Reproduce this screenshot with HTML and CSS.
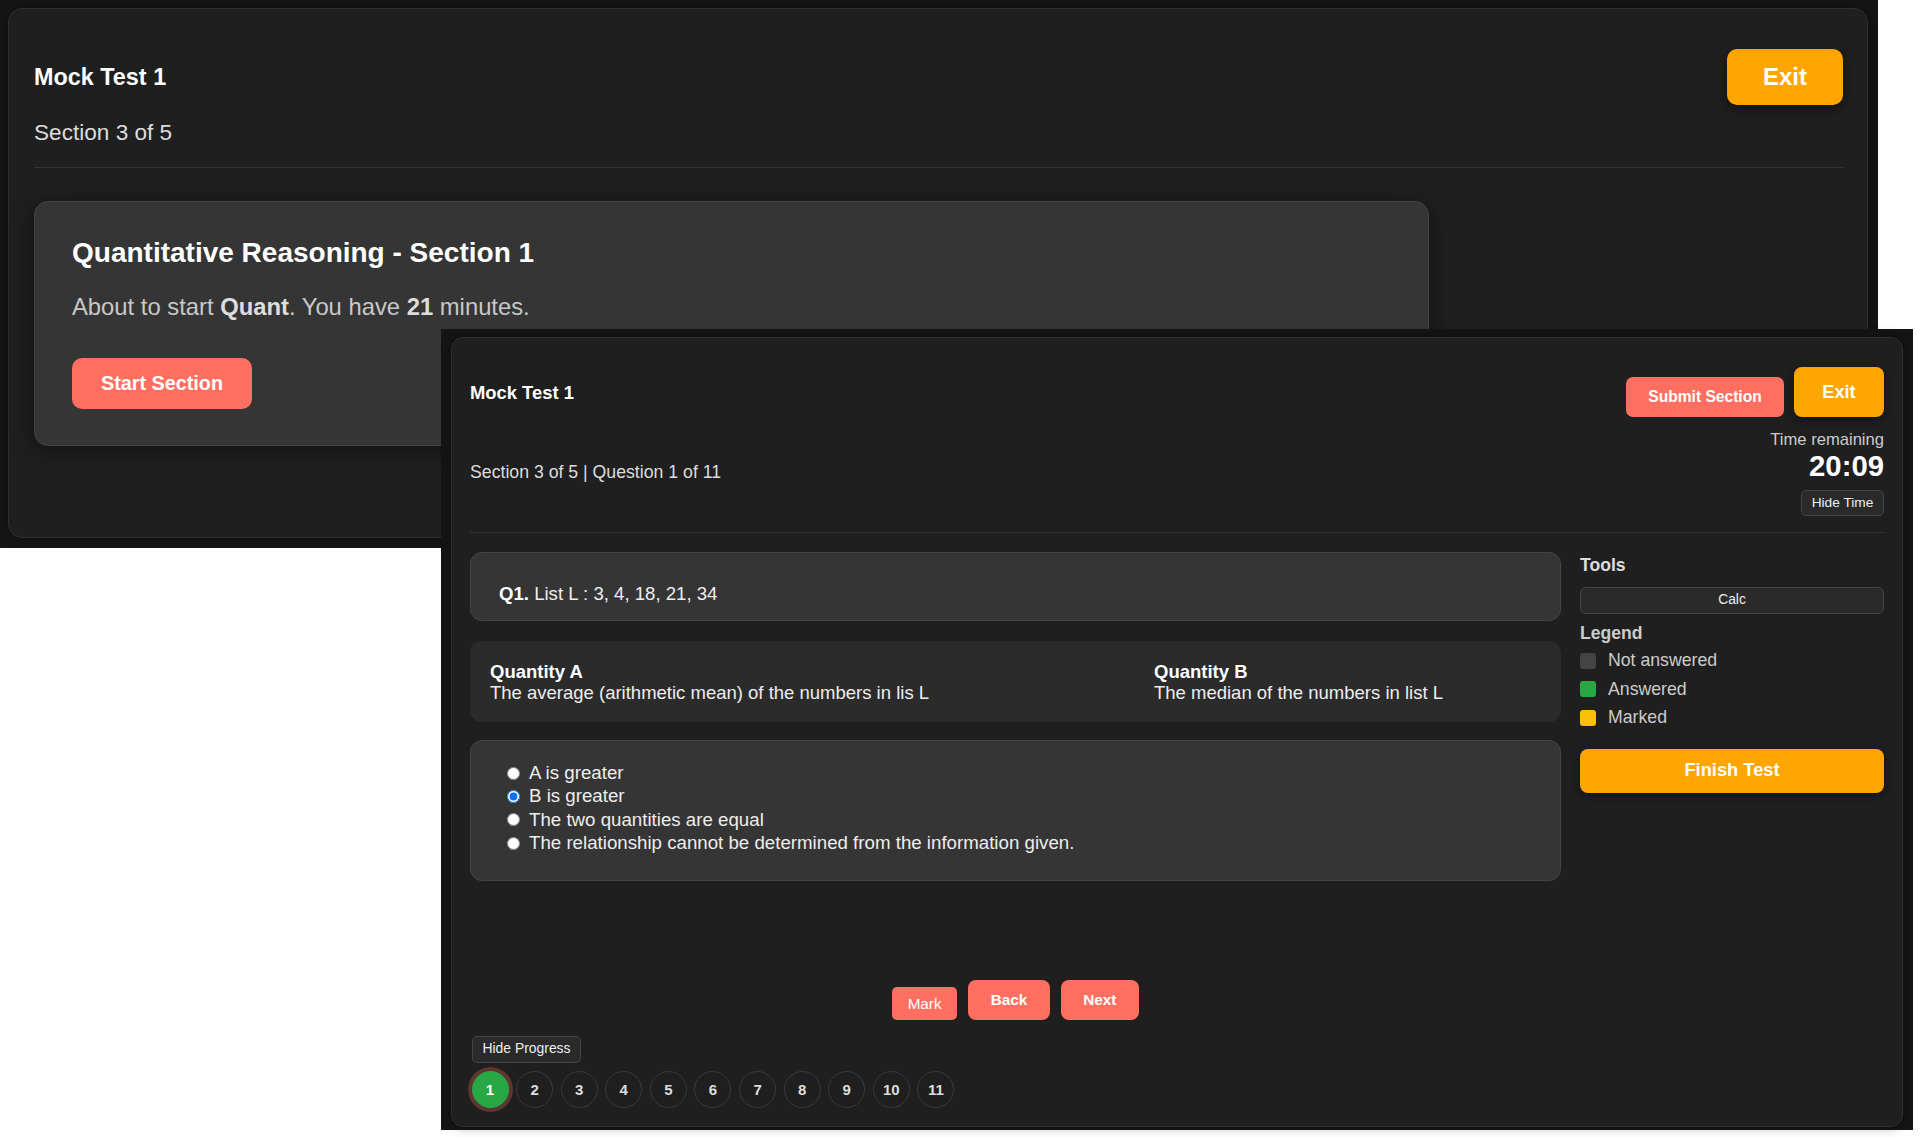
FILE: index.html
```html
<!DOCTYPE html>
<html lang="en">
<head>
<meta charset="utf-8">
<title>Mock Test 1</title>
<link rel="stylesheet" href="styles.css">
</head>
<body>
<div class="desk">

  <section class="win win-intro">
    <div class="card card-intro">
      <header class="intro-head">
        <h1 class="intro-title">Mock Test 1</h1>
        <button class="btn btn-exit-lg">Exit</button>
      </header>
      <p class="intro-sub">Section 3 of 5</p>
      <hr class="rule rule-intro">
      <div class="start-card">
        <h2 class="start-title">Quantitative Reasoning - Section 1</h2>
        <p class="start-text">About to start <b>Quant</b>. You have <b>21</b> minutes.</p>
        <button class="btn btn-start">Start Section</button>
      </div>
    </div>
  </section>

  <section class="win win-test">
    <div class="card card-test">
      <header class="test-head">
        <div class="test-head-left">
          <h1 class="test-title">Mock Test 1</h1>
          <p class="test-sub">Section 3 of 5 | Question 1 of 11</p>
        </div>
        <div class="test-head-right">
          <div class="head-actions">
            <button class="btn btn-submit">Submit Section</button>
            <button class="btn btn-exit-sm">Exit</button>
          </div>
          <div class="time-label">Time remaining</div>
          <div class="time-value">20:09</div>
          <button class="btn btn-ghost btn-hide-time">Hide Time</button>
        </div>
      </header>
      <hr class="rule rule-test">

      <div class="test-body">
        <main class="test-main">
          <div class="panel q-panel"><b>Q1.</b> List L : 3, 4, 18, 21, 34</div>

          <div class="qty-panel">
            <div class="qty">
              <div class="qty-name">Quantity A</div>
              <div class="qty-desc">The average (arithmetic mean) of the numbers in lis L</div>
            </div>
            <div class="qty">
              <div class="qty-name">Quantity B</div>
              <div class="qty-desc">The median of the numbers in list L</div>
            </div>
          </div>

          <div class="panel opt-panel">
            <label class="opt"><input type="radio" name="ans"> A is greater</label>
            <label class="opt"><input type="radio" name="ans" checked> B is greater</label>
            <label class="opt"><input type="radio" name="ans"> The two quantities are equal</label>
            <label class="opt"><input type="radio" name="ans"> The relationship cannot be determined from the information given.</label>
          </div>

          <nav class="q-nav">
            <button class="btn btn-mark">Mark</button>
            <button class="btn btn-nav">Back</button>
            <button class="btn btn-nav">Next</button>
          </nav>
        </main>

        <aside class="side">
          <h3 class="side-h">Tools</h3>
          <button class="btn btn-ghost btn-calc">Calc</button>
          <h3 class="side-h side-h-legend">Legend</h3>
          <ul class="legend">
            <li class="legend-item"><span class="sw sw-none"></span>Not answered</li>
            <li class="legend-item"><span class="sw sw-done"></span>Answered</li>
            <li class="legend-item"><span class="sw sw-mark"></span>Marked</li>
          </ul>
          <button class="btn btn-finish">Finish Test</button>
        </aside>
      </div>

      <button class="btn btn-ghost btn-hide-prog">Hide Progress</button>
      <div class="dots">
        <span class="dot dot-current">1</span>
        <span class="dot">2</span>
        <span class="dot">3</span>
        <span class="dot">4</span>
        <span class="dot">5</span>
        <span class="dot">6</span>
        <span class="dot">7</span>
        <span class="dot">8</span>
        <span class="dot">9</span>
        <span class="dot">10</span>
        <span class="dot">11</span>
      </div>
    </div>
  </section>

</div>
</body>
</html>
```

FILE: styles.css
```css
* { box-sizing: border-box; }

html, body {
  margin: 0;
  padding: 0;
  background: #ffffff;
}

body {
  font-family: "Liberation Sans", Arial, Helvetica, sans-serif;
  color: #eeeeee;
}

.desk {
  position: relative;
  width: 1922px;
  height: 1137px;
  overflow: hidden;
  background: #ffffff;
}

button {
  font-family: inherit;
  cursor: pointer;
}

h1, h2, h3, p, ul { margin: 0; padding: 0; }

/* ---------- windows on the desktop ---------- */
.win {
  position: absolute;
  background: #151515;
}

.win-intro {
  left: 0;
  top: 0;
  width: 1878px;
  height: 548px;
  padding: 8px 10px 10px 8px;
}

.win-test {
  left: 441px;
  top: 329px;
  width: 1472px;
  height: 801px;
  padding: 8px 10px 3px 10px;
}

.card {
  background: #1f1f1f;
  border: 1px solid #2e2e2e;
  border-radius: 14px;
  box-shadow: 0 0 12px rgba(0, 0, 0, 0.35);
}

.rule {
  border: 0;
  border-top: 1px solid #333333;
  margin: 0;
}

.btn {
  border: 0;
  color: #ffffff;
  font-weight: bold;
  line-height: 1;
  padding: 0;
}

/* ---------- window 1 : section intro ---------- */
.card-intro {
  width: 1860px;
  height: 530px;
  padding: 40px 24px 0 25px;
}

.intro-head {
  display: flex;
  justify-content: space-between;
  align-items: center;
  height: 56px;
}

.intro-title {
  font-size: 23.4px;
  font-weight: bold;
  color: #ffffff;
  line-height: 28px;
}

.btn-exit-lg {
  background: #ffa500;
  height: 56px;
  padding: 0 36px;
  font-size: 24px;
  border-radius: 10px;
  box-shadow: 0 4px 12px rgba(0, 0, 0, 0.45);
}

.intro-sub {
  margin-top: 15px;
  font-size: 22.6px;
  line-height: 26px;
  color: #dddddd;
}

.rule-intro { margin-top: 21px; }

.start-card {
  margin-top: 33px;
  width: 1395px;
  height: 245px;
  background: #353535;
  border: 1px solid #444444;
  border-radius: 14px;
  padding: 35px 37px 0 37px;
  box-shadow: 0 4px 22px rgba(0, 0, 0, 0.45);
}

.start-title {
  font-size: 28px;
  font-weight: bold;
  line-height: 32px;
  color: #ffffff;
}

.start-text {
  margin-top: 24px;
  font-size: 23.8px;
  line-height: 28px;
  color: #c8c8c8;
}

.start-text b { color: #dddddd; }

.btn-start {
  margin-top: 37px;
  background: #ff6f61;
  height: 51px;
  padding: 0 29px;
  font-size: 19.8px;
  border-radius: 10px;
}

/* ---------- window 2 : question ---------- */
.card-test {
  width: 1452px;
  height: 790px;
  border-radius: 12px;
  padding: 29px 18px 18px 18px;
}

.test-head {
  display: flex;
  justify-content: space-between;
}

.test-head-left { padding-top: 15px; }

.test-title {
  font-size: 18.4px;
  font-weight: bold;
  line-height: 22px;
  color: #ffffff;
}

.test-sub {
  margin-top: 58px;
  font-size: 17.7px;
  line-height: 21px;
  color: #dddddd;
}

.test-head-right {
  display: flex;
  flex-direction: column;
  align-items: flex-end;
}

.head-actions {
  display: flex;
  align-items: flex-end;
  gap: 10px;
}

.btn-submit {
  background: #ff6f61;
  height: 40px;
  width: 158px;
  font-size: 15.6px;
  border-radius: 7px;
}

.btn-exit-sm {
  background: #ffa500;
  height: 50px;
  width: 90px;
  font-size: 18.2px;
  border-radius: 8px;
  box-shadow: 0 3px 10px rgba(0, 0, 0, 0.45);
}

.time-label {
  margin-top: 12.5px;
  font-size: 16.6px;
  line-height: 19px;
  color: #cccccc;
}

.time-value {
  font-size: 29.3px;
  font-weight: bold;
  line-height: 34px;
  margin-top: 0.5px;
  color: #ffffff;
}

.btn-ghost {
  background: #2a2a2a;
  border: 1px solid #454545;
  color: #eeeeee;
  font-weight: normal;
  border-radius: 5px;
}

.btn-hide-time {
  margin-top: 7px;
  height: 26px;
  width: 83px;
  font-size: 13.7px;
}

.rule-test { margin-top: 16px; }

.test-body {
  display: grid;
  grid-template-columns: 1091px 304px;
  column-gap: 19px;
  margin-top: 19px;
  align-items: start;
}

.panel {
  background: #353535;
  border: 1px solid #454545;
  border-radius: 12px;
}

.q-panel {
  height: 69px;
  padding: 30px 20px 0 28px;
  font-size: 18.6px;
  line-height: 21px;
  color: #eeeeee;
}

.q-panel b { color: #ffffff; }

.qty-panel {
  margin-top: 20px;
  height: 81px;
  background: #2b2b2b;
  border-radius: 12px;
  padding: 20px 20px 19px 20px;
  display: grid;
  grid-template-columns: 664px 1fr;
  font-size: 18.5px;
  line-height: 21px;
}

.qty-name {
  font-weight: bold;
  color: #ffffff;
}

.qty-desc { color: #eeeeee; }

.opt-panel {
  margin-top: 18px;
  height: 141px;
  padding: 20.5px 20px 0 36px;
  display: flex;
  flex-direction: column;
}

.opt {
  display: flex;
  align-items: center;
  height: 23.3px;
  font-size: 18.7px;
  color: #eeeeee;
}

.opt input {
  margin: 0 9px 0 0;
  width: 13px;
  height: 13px;
  accent-color: #0a74f0;
}

.q-nav {
  margin-top: 99px;
  display: flex;
  justify-content: center;
  align-items: flex-end;
  gap: 11px;
}

.btn-mark {
  background: #ff6f61;
  height: 33px;
  width: 65px;
  font-size: 15.3px;
  font-weight: normal;
  border-radius: 5px;
}

.btn-nav {
  background: #ff6f61;
  height: 40px;
  padding: 0 22.5px;
  font-size: 15.3px;
  border-radius: 8px;
}

/* sidebar */
.side { padding-top: 2.5px; }

.side-h {
  font-size: 17.6px;
  font-weight: bold;
  line-height: 21px;
  color: #dddddd;
}

.btn-calc {
  margin-top: 11px;
  width: 100%;
  height: 27px;
  font-size: 13.8px;
  border-radius: 6px;
}

.side-h-legend { margin-top: 9.5px; color: #cccccc; }

.legend {
  list-style: none;
  margin-top: 2.5px;
}

.legend-item {
  display: flex;
  align-items: center;
  height: 28.5px;
  font-size: 17.7px;
  color: #cccccc;
}

.sw {
  width: 16px;
  height: 16px;
  border-radius: 3px;
  margin-right: 12px;
}

.sw-none { background: #444444; }
.sw-done { background: #28a745; }
.sw-mark { background: #ffc107; }

.btn-finish {
  margin-top: 16.5px;
  width: 100%;
  height: 44px;
  background: #ffa500;
  font-size: 18.3px;
  border-radius: 8px;
  box-shadow: 0 3px 10px rgba(0, 0, 0, 0.4);
}

/* progress */
.btn-hide-prog {
  display: block;
  margin-top: 15.5px;
  margin-left: 2px;
  height: 27px;
  width: 109px;
  font-size: 13.9px;
}

.dots {
  display: flex;
  gap: 7.6px;
  margin-top: 8px;
  padding-left: 1.5px;
}

.dot {
  width: 37px;
  height: 37px;
  border-radius: 50%;
  border: 1px solid #3a3a3a;
  display: flex;
  align-items: center;
  justify-content: center;
  font-size: 15px;
  font-weight: bold;
  color: #dddddd;
}

.dot-current {
  background: #28a745;
  border-color: #28a745;
  color: #ffffff;
  box-shadow: 0 0 0 4px rgba(255, 111, 97, 0.28);
}
```
